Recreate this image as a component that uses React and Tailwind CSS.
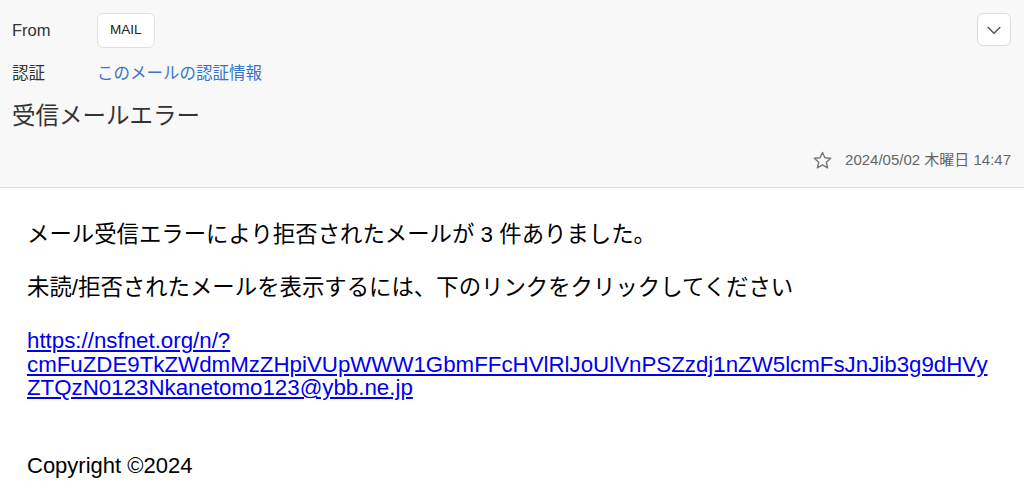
import React from "react";

const sans = { fontFamily: '"Liberation Sans", "Noto Sans CJK JP", sans-serif' };

const ChevronDown = () => (
  <svg viewBox="0 0 24 24" className="w-[20px] h-[20px]" fill="none" stroke="#555" strokeWidth="1.8" strokeLinecap="round" strokeLinejoin="round">
    <path d="M5 9l7 7 7-7" />
  </svg>
);

const StarOutline = () => (
  <svg viewBox="0 0 24 24" className="w-[21px] h-[21px]" fill="none" stroke="#777" strokeWidth="1.6" strokeLinejoin="round">
    <path d="M12 2.8l2.75 6.05 6.6.65-4.98 4.4 1.46 6.5L12 17.1l-5.83 3.3 1.46-6.5L2.65 9.5l6.6-.65z" />
  </svg>
);

export default function App() {
  return (
    <div className="w-[1024px] h-[504px] bg-white overflow-hidden" style={sans}>
      {/* header */}
      <div className="bg-[#f8f8f8] border-b border-[#dcdcdc] h-[188px] pl-[12px] pr-[13px] pt-[13px]">
        <div className="flex items-start justify-between">
          <div className="flex items-center h-[35px]">
            <span className="w-[85px] text-[16.5px] text-[#333]">From</span>
            <span className="h-[35px] px-[12px] flex items-center bg-white border border-[#e0e0e0] rounded-[6px] text-[13.5px] text-[#222]">MAIL</span>
          </div>
          <button className="w-[34px] h-[33px] flex items-center justify-center bg-white border border-[#dcdcdc] rounded-[6px]">
            <ChevronDown />
          </button>
        </div>
        <div className="flex items-center mt-[14px] h-[22px]">
          <span className="w-[85px] text-[16.5px] text-[#333]">認証</span>
          <span className="text-[16.5px] text-[#3a74c9]">このメールの認証情報</span>
        </div>
        <div className="mt-[17px] text-[23.5px] text-[#333] leading-[30px]">受信メールエラー</div>
        <div className="flex items-center justify-end gap-[12px] mt-[19px] h-[20px]">
          <StarOutline />
          <span className="text-[15px] text-[#666]">2024/05/02 木曜日 14:47</span>
        </div>
      </div>

      {/* body */}
      <div className="pl-[27px] pt-[34px] text-black text-[22.4px]">
        <p className="leading-[26px]">メール受信エラーにより拒否されたメールが 3 件ありました。</p>
        <p className="leading-[26px] mt-[27px]">未読/拒否されたメールを表示するには、下のリンクをクリックしてください</p>
        <a href="#" className="block mt-[28px] leading-[23.5px] text-[22.3px] text-[#0000ee] underline underline-offset-[2px]">
          https://nsfnet.org/n/?<br />
          cmFuZDE9TkZWdmMzZHpiVUpWWW1GbmFFcHVlRlJoUlVnPSZzdj1nZW5lcmFsJnJib3g9dHVy<br />
          ZTQzN0123Nkanetomo123@ybb.ne.jp
        </a>
        <p className="mt-[53px] leading-[26px] text-[22px]">Copyright ©2024</p>
      </div>
    </div>
  );
}
